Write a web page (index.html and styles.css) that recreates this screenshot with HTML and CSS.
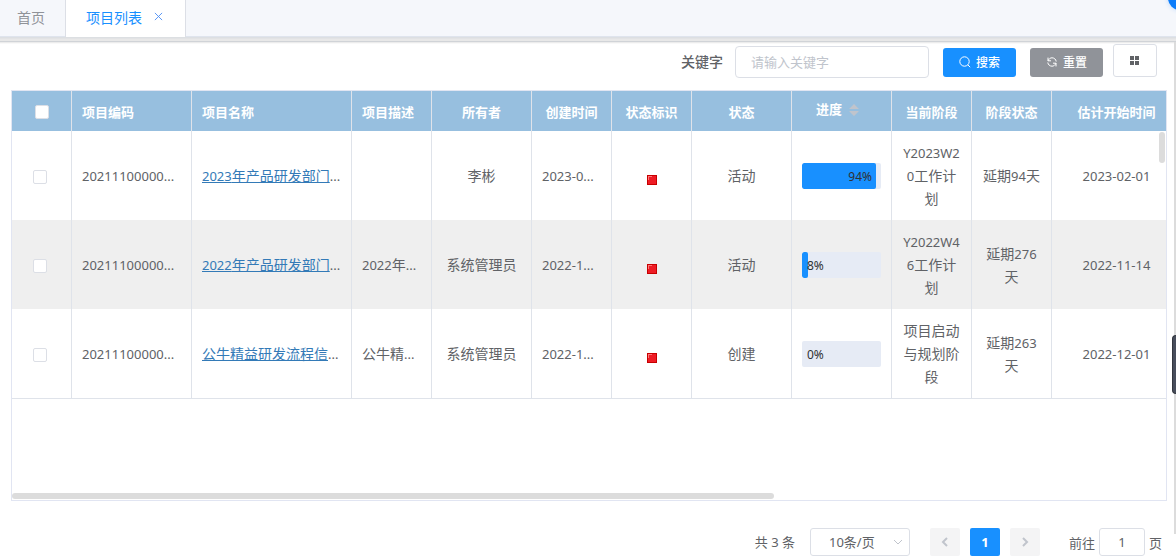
FILE: index.html
```html
<!DOCTYPE html>
<html lang="zh-CN">
<head>
<meta charset="utf-8">
<title>项目列表</title>
<link rel="stylesheet" href="styles.css">
</head>
<body>
<nav class="tabs">
  <a class="tab" href="#home">首页</a>
  <a class="tab active" href="#projects">项目列表
    <svg class="close" viewBox="0 0 10 10"><path d="M1 1l8 8M9 1L1 9"/></svg>
  </a>
</nav>
<div class="shade"></div>
<span class="bubble"></span>
<span class="page-scroll"></span>
<span class="drawer-handle"></span>

<main>
  <form class="toolbar">
    <label for="kw">关键字</label>
    <input id="kw" class="keyword" type="text" placeholder="请输入关键字">
    <button type="button" class="btn primary">
      <svg viewBox="0 0 12 12"><circle cx="5.5" cy="5.5" r="4.7"/><path d="M8.800 8.800l2.400 2.400"/></svg>搜索</button>
    <button type="button" class="btn grey">
      <svg viewBox="0 0 12 12"><path d="M2 5V1.600M2 4.800H5M2.200 4.600C3 2.800 4.300 1.800 6 1.800c2.200 0 4 1.600 4.200 3.700M10 7v3.400M10 7.200H7M9.800 7.400C9 9.200 7.700 10.200 6 10.200c-2.200 0-4-1.600-4.200-3.700"/></svg>重置</button>
    <button type="button" class="btn grid" aria-label="列设置">
      <svg viewBox="0 0 10 10"><path d="M0 0h4v4H0zM5 0h4v4H5zM0 5h4v4H0zM5 5h4v4H5z"/></svg></button>
  </form>

  <section class="table-box">
    <div class="table-view">
    <table>
      <colgroup><col class="w60"><col class="w120"><col class="w160"><col class="w80"><col class="w100"><col class="w80"><col class="w80"><col class="w100"><col class="w100"><col class="w80"><col class="w80"><col class="w130"></colgroup>
      <thead>
        <tr>
          <th><input type="checkbox" aria-label="全选"></th>
          <th class="left">项目编码</th><th class="left">项目名称</th><th class="left">项目描述</th><th>所有者</th><th>创建时间</th><th>状态标识</th><th>状态</th>
          <th class="sortable">进度<svg class="sort" viewBox="0 0 10 12"><path d="M0 5l5-5 5 5zM0 7h10l-5 5z"/></svg></th>
          <th>当前阶段</th><th>阶段状态</th><th>估计开始时间</th>
        </tr>
      </thead>
      <tbody>
        <tr>
          <td class="check"><input type="checkbox" aria-label="选择第1行"></td>
          <td class="left num">20211100000...</td>
          <td class="left"><a href="#p1"><span class="num">2023</span>年产品研发部门</a><span class="num">...</span></td>
          <td></td>
          <td>李彬</td>
          <td class="left num">2023-0...</td>
          <td><span class="flag"></span></td>
          <td>活动</td>
          <td><div class="bar"><div class="fill" style="width:94%"></div><span class="inside">94%</span></div></td>
          <td><span class="num">Y2023W2</span><br><span class="num">0</span>工作计<br>划</td>
          <td>延期<span class="num">94</span>天</td>
          <td class="num">2023-02-01</td>
        </tr>
        <tr class="striped">
          <td class="check"><input type="checkbox" aria-label="选择第2行"></td>
          <td class="left num">20211100000...</td>
          <td class="left"><a href="#p2"><span class="num">2022</span>年产品研发部门</a><span class="num">...</span></td>
          <td class="left"><span class="num">2022</span>年<span class="num">...</span></td>
          <td>系统管理员</td>
          <td class="left num">2022-1...</td>
          <td><span class="flag"></span></td>
          <td>活动</td>
          <td><div class="bar"><div class="fill" style="width:8%"></div><span>8%</span></div></td>
          <td><span class="num">Y2022W4</span><br><span class="num">6</span>工作计<br>划</td>
          <td>延期<span class="num">276</span><br>天</td>
          <td class="num">2022-11-14</td>
        </tr>
        <tr>
          <td class="check"><input type="checkbox" aria-label="选择第3行"></td>
          <td class="left num">20211100000...</td>
          <td class="left"><a href="#p3">公牛精益研发流程信</a><span class="num">...</span></td>
          <td class="left">公牛精<span class="num">...</span></td>
          <td>系统管理员</td>
          <td class="left num">2022-1...</td>
          <td><span class="flag"></span></td>
          <td>创建</td>
          <td><div class="bar"><div class="fill" style="width:0%"></div><span>0%</span></div></td>
          <td>项目启动<br>与规划阶<br>段</td>
          <td>延期<span class="num">263</span><br>天</td>
          <td class="num">2022-12-01</td>
        </tr>
      </tbody>
    </table>
    </div>
    <span class="v-thumb"></span>
    <div class="h-thumb"></div>
  </section>

  <footer class="pager">
    <span class="total">共 3 条</span>
    <div class="select-wrap">
      <select class="size" aria-label="每页条数"><option>10条/页</option><option>20条/页</option></select>
      <svg class="caret" viewBox="0 0 10 10"><path d="M1 3l4 4 4-4"/></svg>
    </div>
    <div class="pages">
      <button type="button" class="page" aria-label="上一页"><svg viewBox="0 0 10 10"><path d="M7 1L3 5l4 4"/></svg></button>
      <button type="button" class="page current">1</button>
      <button type="button" class="page" aria-label="下一页"><svg viewBox="0 0 10 10"><path d="M3 1l4 4-4 4"/></svg></button>
    </div>
    <label class="jump">前往<input type="text" value="1">页</label>
  </footer>
</main>
</body>
</html>
```
FILE: styles.css
```css
* { box-sizing: border-box; }
body {
  margin: 0;
  background: #fff;
  color: #606266;
  font-family: "Noto Sans", "Noto Sans CJK SC", sans-serif;
  font-size: 14px;
  overflow: hidden;
}
button, input, select { font-family: inherit; margin: 0; }
svg { flex: none; }

.tabs { display: flex; height: 37px; background: #f5f7fb; border-bottom: 1px solid #dfe4ed; }
.tab {
  display: flex;
  align-items: center;
  height: 37px;
  padding: 0 20px 4px;
  color: #909399;
  text-decoration: none;
}
.tab:first-child { padding: 0 20px 4px 17px; }
.tab.active { gap: 12px; color: #1890ff; background: #fff; border: solid #dcdfe6; border-width: 0 1px; padding-right: 22px; }
.close { width: 9px; height: 9px; fill: none; stroke: #4a8df5; stroke-width: 1; }
.shade { height: 7px; background: linear-gradient(#dcdfe2 0 1px, #e2e3e5 1px 2px, #e8e8e8 2px 4px, #d0d3d7 4px 5px, #ececec 5px 6px, #f9f9f9 6px); }
.bubble {
  position: absolute; top: -14px; right: -16px;
  width: 24px; height: 24px; border-radius: 50%;
  background: #0d7dfa; box-shadow: 0 0 5px #b9d7fb;
}
.page-scroll { position: absolute; top: 42px; right: 0; width: 2px; height: 492px; background: #dcdcdc; }
.drawer-handle { position: absolute; top: 335px; right: 0; width: 4px; height: 59px; background: #484d5b; border-radius: 4px 0 0 4px; border: 1px solid #33363f; border-right: 0; }

main { padding: 0 9px 0 11px; }
.toolbar { display: flex; align-items: center; justify-content: flex-end; height: 46px; padding: 0 10px 10px 0; }
.toolbar label { font-weight: 500; margin-right: 12px; padding-bottom: 2px; }
.keyword {
  width: 194px; height: 32px; padding: 0 15px;
  border: 1px solid #dcdfe6; border-radius: 4px;
  font-size: 13px; color: #606266; outline: none;
}
.keyword::placeholder { color: #c0c4cc; }
.btn {
  display: flex; align-items: center; justify-content: center; gap: 5px;
  width: 73px; height: 29px; padding: 0; margin-left: 14px;
  border: 0; border-radius: 3px; color: #fff; font-size: 12px; font-weight: 500;
}
.btn svg { width: 12px; height: 12px; fill: none; stroke: #fff; stroke-width: 1; }
.primary { background: #1890ff; }
.grey { background: #909399; }
.btn.grid { width: 44px; height: 33px; margin: 0 0 3px 10px; border: 1px solid #dcdfe6; background: #fff; }
.btn.grid svg { width: 10px; height: 10px; fill: #606266; stroke: none; }

.table-box { position: relative; height: 411px; border: 1px solid #e1e5f2; display: flex; flex-direction: column; justify-content: space-between; }
.table-view { overflow: hidden; }
table { table-layout: fixed; width: 1170px; min-width: 100%; border-collapse: separate; border-spacing: 0; }
.w60 { width: 60px; } .w80 { width: 80px; } .w100 { width: 100px; }
.w120 { width: 120px; } .w130 { width: 130px; } .w160 { width: 160px; }
th, td { text-align: center; padding: 0 10px; white-space: nowrap; border-right: 1px solid #dfe3ea; }
th { height: 40px; background: #97bfdf; color: #fff; font-size: 13px; font-weight: 700; padding-top: 2px; line-height: 20px; }
th.left, td.left { text-align: left; }
th.sortable { padding: 0 18px 4px 10px; }
.sort { width: 10px; height: 12px; margin-left: 7px; fill: #c0c4cc; vertical-align: -2px; }
td { height: 89px; line-height: 23px; }
tbody tr:last-child td { height: 90px; border-bottom: 1px solid #dfe3ea; }
.striped td { background: #efefef; }
.num { font-size: 13px; }
td.num { padding-top: 1px; }
span.num { line-height: 20px; }
td a { color: #337ab7; text-decoration: underline; }
input[type="checkbox"] {
  appearance: none; display: block; width: 14px; height: 14px; margin: 0 auto;
  border: 1px solid #dcdfe6; border-radius: 2px; background: #fff;
}
td.check { padding: 3px 14px 0 10px; }
.flag {
  display: block; width: 10px; height: 10px; margin: 8px auto 0;
  border: 1px solid #c70000; background: linear-gradient(#f77, #f77) 0 0 / 4px 1px no-repeat, linear-gradient(#f77, #f77) 0 0 / 1px 4px no-repeat, #ee1c25;
}
.bar { position: relative; display: flex; height: 26px; background: #e6ebf5; border-radius: 2px; overflow: hidden; font-size: 12px; line-height: 27px; color: #303133; }
.bar .fill { background: #1890ff; border-radius: 2px; }
.bar span { position: absolute; left: 5px; }
.bar .inside { left: auto; right: 9px; }
.v-thumb { position: absolute; top: 41px; right: 1px; width: 6px; height: 31px; background: #dcdcdc; border-radius: 3px; }
.h-thumb { width: 66%; height: 6px; margin-bottom: 1px; background: #dcdcdc; border-radius: 3px; }

.pager { display: flex; align-items: center; justify-content: flex-end; padding: 27px 5px 0 0; font-size: 13px; }
.total { padding-bottom: 2px; }
.select-wrap { position: relative; margin: 0 20px 0 15px; }
.size { appearance: none; display: block; width: 100px; height: 28px; padding: 0 18px; border: 1px solid #dcdfe6; border-radius: 3px; background: #fff; color: #606266; font-size: 13px; }
.caret { position: absolute; top: 9px; right: 7px; width: 10px; height: 10px; fill: none; stroke: #c0c4cc; }
.pages { display: flex; gap: 10px; }
.page { display: flex; align-items: center; justify-content: center; width: 30px; height: 28px; padding: 0; border: 0; border-radius: 2px; background: #f4f4f5; }
.page svg { width: 10px; height: 10px; fill: none; stroke: #c0c4cc; stroke-width: 2; }
.page.current { background: #1890ff; color: #fff; font-size: 13px; font-weight: 700; }
.jump { display: flex; align-items: center; margin-left: 29px; }
.jump input { width: 46px; height: 28px; margin: 0 4px; padding: 0; text-align: center; border: 1px solid #dcdfe6; border-radius: 3px; color: #606266; font-size: 13px; }
```
